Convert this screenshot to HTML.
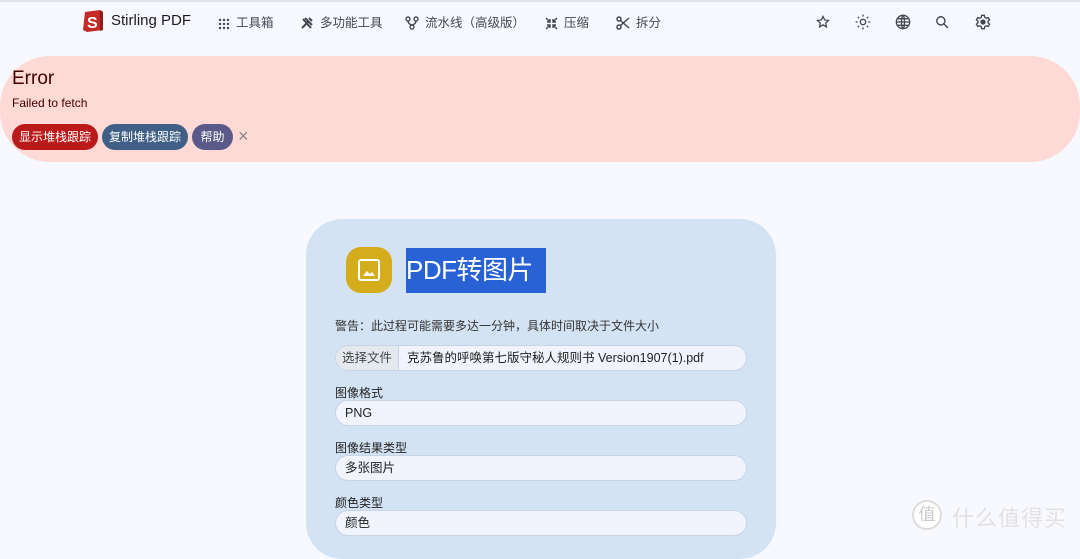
<!DOCTYPE html>
<html><head><meta charset="utf-8"><style>
*{margin:0;padding:0;box-sizing:border-box}
body{width:1080px;height:542px;overflow:hidden;background:#f8f9fe;font-family:"Liberation Sans","Noto Sans CJK SC",sans-serif;position:relative;color:#1b1b1f}
.a{position:absolute;white-space:nowrap}
.nav{font-size:12.5px;color:#44474f;top:12px}
.nav svg{vertical-align:-3px;margin-right:6px}
.btn{position:absolute;top:124px;height:26px;border-radius:13px;color:#fff;font-size:12px;line-height:26px;text-align:center;white-space:nowrap}
.lbl{position:absolute;left:335px;font-size:12px;color:#222}
.inp{position:absolute;left:335px;width:412px;height:26px;border-radius:13px;background:#f1f4fc;border:1px solid #c9d4e4;font-size:12.5px;line-height:24px;padding-left:9px;color:#222;white-space:nowrap}
</style></head><body>
<div class="a" style="left:0;top:0;width:1080px;height:2px;background:#dfe1e6"></div>
<svg class="a" style="left:82px;top:9px" width="22" height="24" viewBox="0 0 22 24"><path d="M3 3 L18 1 L21 3 L21 21 L5 23 L1 21 Z" fill="#c42a28"/><path d="M18 1 L21 3 L21 21 L18 22 Z" fill="#8f1c1a"/><text x="5" y="19" font-size="16" font-weight="bold" fill="#fff" font-family="Liberation Sans">S</text></svg>
<div class="a" style="left:111px;top:12px;font-size:15px;color:#1b1b1f">Stirling PDF</div>
<div class="a nav" style="left:218px"><svg width="12" height="12" viewBox="0 0 12 12" fill="#44474f"><circle cx="2" cy="2" r="1.2"/><circle cx="6" cy="2" r="1.2"/><circle cx="10" cy="2" r="1.2"/><circle cx="2" cy="6" r="1.2"/><circle cx="6" cy="6" r="1.2"/><circle cx="10" cy="6" r="1.2"/><circle cx="2" cy="10" r="1.2"/><circle cx="6" cy="10" r="1.2"/><circle cx="10" cy="10" r="1.2"/></svg>工具箱</div>
<div class="a nav" style="left:300px"><svg width="14" height="14" viewBox="0 0 14 14" stroke="#44474f" stroke-width="2" fill="none"><path d="M2 12 L9 5 M5 2 L12 9 M9 2 L12 5"/><path d="M3 3 L11 12"/></svg>多功能工具</div>
<div class="a nav" style="left:405px"><svg width="14" height="14" viewBox="0 0 14 14" stroke="#44474f" stroke-width="1.4" fill="none"><circle cx="3" cy="3" r="2"/><circle cx="11" cy="3" r="2"/><circle cx="7" cy="11" r="2"/><path d="M3 5 Q3 8 7 9 Q11 8 11 5"/></svg>流水线（高级版）</div>
<div class="a nav" style="left:545px"><svg width="13" height="13" viewBox="0 0 13 13" stroke="#44474f" stroke-width="1.4" fill="none"><path d="M1 1 L5 5 M5 2 L5 5 L2 5 M12 1 L8 5 M8 2 L8 5 L11 5 M1 12 L5 8 M2 8 L5 8 L5 11 M12 12 L8 8 M11 8 L8 8 L8 11"/></svg>压缩</div>
<div class="a nav" style="left:616px"><svg width="14" height="14" viewBox="0 0 14 14" stroke="#44474f" stroke-width="1.5" fill="none"><circle cx="3" cy="3" r="2"/><circle cx="3" cy="11" r="2"/><path d="M4.5 4.5 L13 12 M4.5 9.5 L13 2"/></svg>拆分</div>
<svg class="a" style="left:816px;top:15px" width="14" height="14" viewBox="0 0 24 24" fill="none" stroke="#44474f" stroke-width="2.2"><path d="M12 2.5l2.9 6 6.6.8-4.9 4.5 1.3 6.5L12 17l-5.9 3.3 1.3-6.5L2.5 9.3l6.6-.8z"/></svg>
<svg class="a" style="left:855px;top:14px" width="16" height="16" viewBox="0 0 24 24" fill="none" stroke="#44474f" stroke-width="2"><circle cx="12" cy="12" r="4"/><path d="M12 1v3M12 20v3M1 12h3M20 12h3M4.2 4.2l2 2M17.8 17.8l2 2M4.2 19.8l2-2M17.8 6.2l2-2"/></svg>
<svg class="a" style="left:895px;top:14px" width="16" height="16" viewBox="0 0 24 24" fill="none" stroke="#44474f" stroke-width="2"><circle cx="12" cy="12" r="10"/><path d="M2 12h20M12 2c3 3 3 17 0 20M12 2c-3 3-3 17 0 20M4 7h16M4 17h16"/></svg>
<svg class="a" style="left:935px;top:15px" width="14" height="14" viewBox="0 0 24 24" fill="none" stroke="#44474f" stroke-width="2.4"><circle cx="10" cy="10" r="7"/><path d="M15 15l7 7"/></svg>
<svg class="a" style="left:975px;top:14px" width="16" height="16" viewBox="0 0 24 24" fill="none" stroke="#44474f" stroke-width="2"><path d="M10 2h4l.6 3 2.4 1.4 2.9-1 2 3.4-2.3 2v2.4l2.3 2-2 3.4-2.9-1L14.6 19 14 22h-4l-.6-3L7 17.6l-2.9 1-2-3.4 2.3-2v-2.4l-2.3-2 2-3.4 2.9 1L9.4 5z"/><circle cx="12" cy="12" r="3" fill="#44474f"/></svg>

<div class="a" style="left:0;top:56px;width:1080px;height:106px;background:#ffd9d6;border-radius:50px"></div>
<div class="a" style="left:12px;top:68px;font-size:19px;color:#410002">Error</div>
<div class="a" style="left:12px;top:96px;font-size:12px;color:#410002">Failed to fetch</div>
<div class="btn" style="left:12px;width:86px;background:#ba1a1a">显示堆栈跟踪</div>
<div class="btn" style="left:102px;width:86px;background:#3f5f86">复制堆栈跟踪</div>
<div class="btn" style="left:192px;width:41px;background:#5a5a8a">帮助</div>
<div class="a" style="left:238px;top:126px;font-size:18px;color:#888">×</div>

<div class="a" style="left:306px;top:219px;width:470px;height:340px;background:#d4e3f3;border-radius:36px"></div>
<div class="a" style="left:346px;top:247px;width:46px;height:46px;background:#d4ad1d;border-radius:15px"></div>
<svg class="a" style="left:356px;top:257px" width="26" height="26" viewBox="0 0 26 26" fill="none" stroke="#fff" stroke-width="2"><rect x="3" y="3" width="20" height="20" rx="2"/><path d="M7 19l4-5 3 3 2-2 3 4z" fill="#fff" stroke="none"/></svg>
<div class="a" style="left:406px;top:248px;width:140px;height:45px;background:#2962d4;color:#fff;font-size:26px;line-height:45px;letter-spacing:-0.5px;overflow:hidden">PDF转图片</div>
<div class="lbl" style="top:317px;color:#333;white-space:nowrap">警告：此过程可能需要多达一分钟，具体时间取决于文件大小</div>
<div class="inp" style="top:345px;padding-left:0;overflow:hidden"><span style="display:inline-block;width:63px;background:#e4e9f0;border-right:1px solid #c9d4e4;text-align:center;color:#444;height:24px">选择文件</span><span style="padding-left:8px">克苏鲁的呼唤第七版守秘人规则书 Version1907(1).pdf</span></div>
<div class="lbl" style="top:384px">图像格式</div>
<div class="inp" style="top:400px">PNG</div>
<div class="lbl" style="top:439px">图像结果类型</div>
<div class="inp" style="top:455px">多张图片</div>
<div class="lbl" style="top:494px">颜色类型</div>
<div class="inp" style="top:510px">颜色</div>

<div class="a" style="left:912px;top:500px;width:30px;height:30px;border-radius:50%;border:2px solid #ddd;background:#fff;color:#ccc;font-size:17px;text-align:center;line-height:26px">值</div>
<div class="a" style="left:952px;top:501px;font-size:22px;color:#e2e2e2;letter-spacing:1px">什么值得买</div>
</body></html>
